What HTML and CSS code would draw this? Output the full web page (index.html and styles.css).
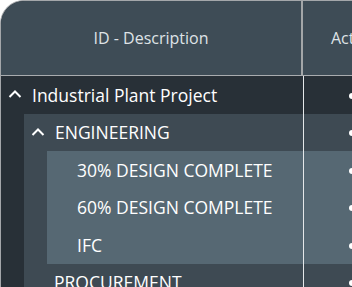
FILE: index.html
```html
<!DOCTYPE html>
<html lang="en">
<head>
    <meta charset="UTF-8">
    <meta name="viewport" content="width=device-width, initial-scale=1.0">
    <title>Project Tree</title>
    <link rel="stylesheet" href="styles.css">
</head>
<body>
    <div class="tree-table">
        <div class="head">
            <div class="head-cell desc">ID - Description</div>
            <div class="head-cell act">Actions</div>
        </div>

        <div class="group level-0">
            <div class="row">
                <div class="cell desc">
                    <svg class="chevron" viewBox="0 0 14 9"><path d="M1.5 8 L7 2.5 L12.5 8" /></svg>
                    <span class="label">Industrial Plant Project</span>
                </div>
                <div class="cell act"><span class="dot"></span></div>
            </div>

            <div class="group level-1">
                <div class="row">
                    <div class="cell desc">
                        <svg class="chevron" viewBox="0 0 14 9"><path d="M1.5 8 L7 2.5 L12.5 8" /></svg>
                        <span class="label">ENGINEERING</span>
                    </div>
                    <div class="cell act"><span class="dot"></span></div>
                </div>

                <div class="group level-2">
                    <div class="row">
                        <div class="cell desc leaf"><span class="label">30% DESIGN COMPLETE</span></div>
                        <div class="cell act"><span class="dot"></span></div>
                    </div>
                    <div class="row">
                        <div class="cell desc leaf"><span class="label">60% DESIGN COMPLETE</span></div>
                        <div class="cell act"><span class="dot"></span></div>
                    </div>
                    <div class="row">
                        <div class="cell desc leaf"><span class="label">IFC</span></div>
                        <div class="cell act"><span class="dot"></span></div>
                    </div>
                </div>
            </div>

            <div class="group level-1">
                <div class="row">
                    <div class="cell desc leaf"><span class="label">PROCUREMENT</span></div>
                    <div class="cell act"><span class="dot"></span></div>
                </div>
            </div>
        </div>
    </div>
</body>
</html>
```

FILE: styles.css
```css
body {
    margin: 0;
    background: #ffffff;
    overflow: hidden;
    font-family: "Open Sans", "Noto Sans", sans-serif;
}
.tree-table {
    width: 420px;
    border: 1px solid #a4a7aa;
    border-right: none;
    border-top-left-radius: 24px;
    overflow: hidden;
    background: #283037;
}
.head {
    display: flex;
    height: 74px;
    background: #3e4c56;
    border-bottom: 1px solid #a9acaf;
}
.head-cell {
    display: flex;
    align-items: center;
    justify-content: center;
    color: #dfe3e6;
    font-size: 16px;
}
.head-cell.desc {
    flex: 1;
    border-right: 2px solid #a3a6a8;
}
.head-cell.act {
    width: 118px;
    justify-content: flex-start;
    padding-left: 28px;
    box-sizing: border-box;
}
.group.level-0 {
    background: #283037;
}
.group.level-1 {
    margin-left: 23px;
    background: #3e4a53;
}
.group.level-2 {
    margin-left: 23px;
    background: #566873;
}
.row {
    display: flex;
    height: 37.5px;
}
.cell {
    display: flex;
    align-items: center;
    color: #ffffff;
    font-size: 17.5px;
}
.cell.desc {
    flex: 1;
    padding-left: 7px;
    border-right: 1px solid #e4e7e9;
}
.cell.desc.leaf {
    padding-left: 30px;
}
.cell.act {
    width: 117px;
    padding-left: 45px;
    box-sizing: border-box;
}
.chevron {
    width: 14px;
    height: 9px;
    margin-right: 10px;
    margin-top: -2px;
    fill: none;
    stroke: #ffffff;
    stroke-width: 2;
}
.dot {
    width: 6px;
    height: 6px;
    margin-top: 2px;
    border-radius: 50%;
    background: #ffffff;
}
```
